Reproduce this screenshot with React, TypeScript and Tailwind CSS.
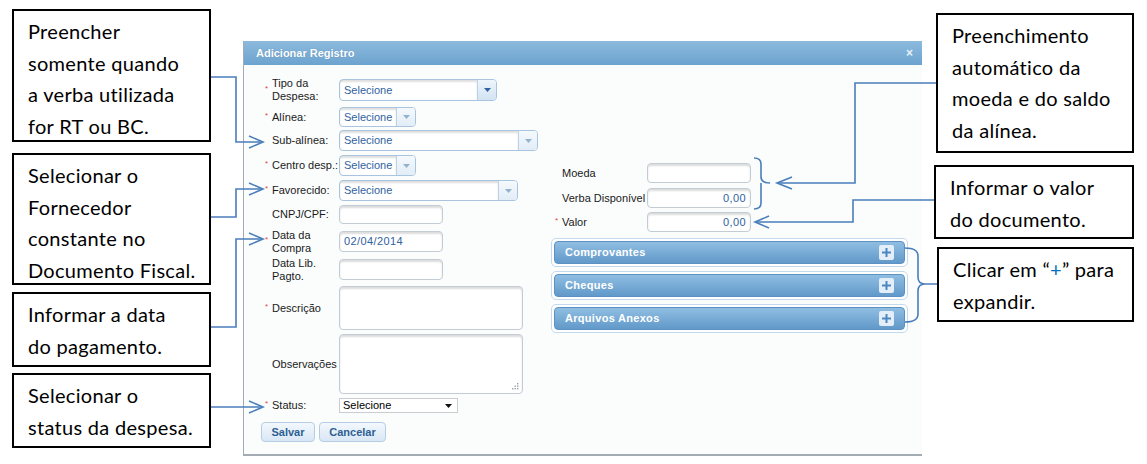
import React from "react";

const ui = { fontFamily: '"Liberation Sans", Arial, sans-serif' };
const callFont = { fontFamily: 'Lato, "Open Sans", sans-serif' };

function Caret({ color = "#3a6ea5" }: { color?: string }) {
  return (
    <svg width="7" height="4" viewBox="0 0 7 4">
      <path d="M0 0 H7 L3.5 4 Z" fill={color} />
    </svg>
  );
}

function Combo({ className, dark }: { className: string; dark?: boolean }) {
  return (
    <div
      className={`flex rounded-[4px] border border-[#a9c4de] bg-white overflow-hidden ${className}`}
    >
      <div className="flex-1 flex items-center pl-[4px] text-[11px] text-[#2f62a0] shadow-[inset_0_2px_2px_rgba(0,0,0,0.13)]">
        Selecione
      </div>
      <div
        className={`w-[19px] flex items-center justify-center border-l border-[#bcd2e6] bg-linear-to-b ${
          dark ? "from-[#eef5fb] to-[#d2e3f3]" : "from-[#f5f9fc] to-[#e2edf7]"
        }`}
      >
        <Caret color={dark ? "#2f63a0" : "#93b2cf"} />
      </div>
    </div>
  );
}

function Field({ className, value, right }: { className: string; value?: string; right?: boolean }) {
  return (
    <div
      className={`flex items-center rounded-[4px] border border-[#c3ccd5] bg-white shadow-[inset_0_2px_2px_rgba(0,0,0,0.14)] text-[11px] text-[#2f62a0] tracking-[0.4px] ${
        right ? "justify-end pr-[4px]" : "pl-[4px]"
      } ${className}`}
    >
      {value}
    </div>
  );
}

function Req({ on }: { on?: boolean }) {
  return (
    <span className="w-[7px] shrink-0 text-[8px] leading-none text-[#e0403c] -mt-[3px]">
      {on ? "*" : ""}
    </span>
  );
}

function Row({
  className,
  req,
  label,
  children,
}: {
  className: string;
  req?: boolean;
  label: React.ReactNode;
  children: React.ReactNode;
}) {
  return (
    <div className={`flex items-center ${className}`}>
      <Req on={req} />
      <div className="w-[67px] shrink-0 text-[11px] leading-[13px] text-[#1a1a1a] whitespace-nowrap">{label}</div>
      {children}
    </div>
  );
}

function Panel({ title, className }: { title: string; className: string }) {
  return (
    <div className={`rounded-[5px] border border-[#c4d9ed] bg-white p-[2px] ${className}`}>
      <div className="h-full flex items-center justify-between rounded-[4px] border border-[#5b92c3] bg-linear-to-b from-[#90bee2] to-[#6199c9] pl-[10px] pr-[10px]">
        <span className="text-[11px] font-bold text-white tracking-[0.3px]">{title}</span>
        <span className="w-[15px] h-[15px] rounded-[2px] bg-[#e3eef8] flex items-center justify-center">
          <svg width="9" height="9" viewBox="0 0 9 9">
            <path d="M3.5 0 H5.5 V3.5 H9 V5.5 H5.5 V9 H3.5 V5.5 H0 V3.5 H3.5 Z" fill="#4d87c0" />
          </svg>
        </span>
      </div>
    </div>
  );
}

function Callout({ className, lines }: { className: string; lines: React.ReactNode[] }) {
  return (
    <div
      className={`border-2 border-black bg-white pl-[14px] pt-[5px] text-[20px] leading-[31.5px] tracking-[0.3px] text-black ${className}`}
      style={callFont}
    >
      {lines.map((l, i) => (
        <div key={i} className="whitespace-nowrap">
          {l}
        </div>
      ))}
    </div>
  );
}

function Connectors() {
  const c = "#4a7ebb";
  return (
    <svg
      className="absolute inset-0 pointer-events-none"
      width="1147"
      height="464"
      viewBox="0 0 1147 464"
      fill="none"
      stroke={c}
      strokeWidth="1.6"
    >
      <path d="M211 77 H236 V142 H262" />
      <path d="M249 136 L263 142 L249 148" />
      <path d="M211 217 H236 V189 H262" />
      <path d="M249 183 L263 189 L249 195" />
      <path d="M211 327 H236 V239 H262" />
      <path d="M249 233 L263 239 L249 245" />
      <path d="M211 407 H262" />
      <path d="M249 401 L263 407 L249 413" />

      <path d="M936 83 H855 V183 H778" />
      <path d="M792 177 L777 183 L792 189" />
      <path d="M754 158 Q761 158 761 164 V177 Q761 183 770 183 M761 183 Q761 188 761 190 V203 Q761 209 754 209" />
      <path d="M934 200 H853 V222 H756" />
      <path d="M769 216 L755 222 L769 228" />
      <path d="M905 248 Q918 248 918 256 V277 Q918 284 925 284 H937 M925 284 Q918 284 918 291 V314 Q918 322 905 322" />
    </svg>
  );
}

export default function App() {
  return (
    <div className="relative w-[1147px] h-[464px] bg-white overflow-hidden flex items-start">
      <div className="ml-[12px] mt-[9px] w-[199px] shrink-0 flex flex-col">
        <Callout
          className="h-[133px]"
          lines={["Preencher", "somente quando", "a verba utilizada", "for RT ou BC."]}
        />
        <Callout
          className="h-[132px] mt-[11px]"
          lines={["Selecionar o", "Fornecedor", "constante no", "Documento Fiscal."]}
        />
        <Callout className="h-[75px] mt-[7px]" lines={["Informar a data", "do pagamento."]} />
        <Callout className="h-[75px] mt-[6px]" lines={["Selecionar o", "status da despesa."]} />
      </div>

      <div
        className="ml-[32px] mt-[41px] w-[679px] h-[415px] shrink-0 border-l border-b-2 border-[#a3abb3] bg-[#fbfdfd] flex flex-col"
        style={ui}
      >
        <div className="h-[24px] shrink-0 flex items-center justify-between bg-linear-to-b from-[#8dbadd] to-[#6ca3cf] pl-[12px] pr-[9px]">
          <span className="text-[11px] font-bold text-white [text-shadow:0_0_1px_rgba(60,100,150,0.5)]">
            Adicionar Registro
          </span>
          <span className="text-[12px] font-bold text-[#e9f1f9] leading-none">×</span>
        </div>

        <div className="flex flex-1">
          <div className="w-[307px] shrink-0 pl-[21px] pt-[14px] flex flex-col">
            <Row className="h-[22px]" req label={<>Tipo da<br />Despesa:</>}>
              <Combo className="w-[158px] h-[22px]" dark />
            </Row>
            <Row className="h-[20px] mt-[6px]" req label="Alínea:">
              <Combo className="w-[77px] h-[20px]" />
            </Row>
            <Row className="h-[21px] mt-[3px]" label="Sub-alínea:">
              <Combo className="w-[199px] h-[21px]" />
            </Row>
            <Row className="h-[21px] mt-[4px]" req label="Centro desp.:">
              <Combo className="w-[77px] h-[21px]" />
            </Row>
            <Row className="h-[21px] mt-[4px]" req label="Favorecido:">
              <Combo className="w-[179px] h-[21px]" />
            </Row>
            <Row className="h-[19px] mt-[4px]" label="CNPJ/CPF:">
              <Field className="w-[104px] h-[19px]" />
            </Row>
            <Row className="h-[21px] mt-[7px]" req label={<>Data da<br />Compra</>}>
              <Field className="w-[104px] h-[21px]" value="02/04/2014" />
            </Row>
            <Row className="h-[21px] mt-[7px]" label={<>Data Lib.<br />Pagto.</>}>
              <Field className="w-[104px] h-[21px]" />
            </Row>
            <Row className="h-[44px] mt-[6px]" req label="Descrição">
              <Field className="w-[184px] h-[44px]" />
            </Row>
            <Row className="h-[60px] mt-[4px]" label="Observações">
              <div className="relative w-[184px] h-[60px] rounded-[4px] border border-[#c3ccd5] bg-white shadow-[inset_0_2px_2px_rgba(0,0,0,0.14)]">
                <svg className="absolute right-[3px] bottom-[3px]" width="7" height="7" viewBox="0 0 7 7">
                  <g fill="#9aa3ab">
                    <rect x="5" y="0" width="1.4" height="1.4" />
                    <rect x="2.5" y="2.5" width="1.4" height="1.4" />
                    <rect x="5" y="2.5" width="1.4" height="1.4" />
                    <rect x="0" y="5" width="1.4" height="1.4" />
                    <rect x="2.5" y="5" width="1.4" height="1.4" />
                    <rect x="5" y="5" width="1.4" height="1.4" />
                  </g>
                </svg>
              </div>
            </Row>
            <Row className="h-[15px] mt-[4px]" req label="Status:">
              <div className="w-[119px] h-[15px] flex items-center justify-between border border-[#c9cdd1] bg-white pl-[3px] pr-[5px] text-[11px] text-black">
                Selecione
                <Caret color="#111" />
              </div>
            </Row>
            <div className="h-[20px] mt-[9px] -ml-[4px] flex gap-[4px]">
              <button className="w-[54px] h-[20px] rounded-[4px] border border-[#b5cde4] bg-linear-to-b from-[#f3f8fd] to-[#d9e7f5] text-[11px] font-bold text-[#2d5f92]">
                Salvar
              </button>
              <button className="w-[67px] h-[20px] rounded-[4px] border border-[#b5cde4] bg-linear-to-b from-[#f3f8fd] to-[#d9e7f5] text-[11px] font-bold text-[#2d5f92]">
                Cancelar
              </button>
            </div>
          </div>

          <div className="w-[357px] shrink-0 pt-[98px] flex flex-col">
            <div className="flex items-center h-[20px] pl-[4px]">
              <Req />
              <div className="w-[85px] text-[11px] text-[#1a1a1a]">Moeda</div>
              <Field className="w-[104px] h-[20px]" />
            </div>
            <div className="flex items-center h-[20px] mt-[5px] pl-[4px]">
              <Req />
              <div className="w-[85px] text-[11px] text-[#1a1a1a] whitespace-nowrap">Verba Disponível</div>
              <Field className="w-[104px] h-[20px]" value="0,00" right />
            </div>
            <div className="flex items-center h-[20px] mt-[4px] pl-[4px]">
              <Req on />
              <div className="w-[85px] text-[11px] text-[#1a1a1a]">Valor</div>
              <Field className="w-[104px] h-[20px]" value="0,00" right />
            </div>
            <div className="mt-[6px] flex flex-col gap-[4px]">
              <Panel title="Comprovantes" className="h-[29px]" />
              <Panel title="Cheques" className="h-[29px]" />
              <Panel title="Arquivos Anexos" className="h-[29px]" />
            </div>
          </div>
        </div>
      </div>

      <div className="ml-[14px] mt-[13px] w-[198px] shrink-0 flex flex-col">
        <Callout
          className="h-[140px]"
          lines={["Preenchimento", "automático da", "moeda e do saldo", "da alínea."]}
        />
        <Callout className="h-[74px] mt-[12px] -ml-[2px]" lines={["Informar o valor", "do documento."]} />
        <Callout
          className="h-[75px] mt-[8px] ml-[1px]"
          lines={[
            <>
              Clicar em “<span className="text-[#0070c0]">+</span>” para
            </>,
            "expandir.",
          ]}
        />
      </div>

      <Connectors />
    </div>
  );
}
